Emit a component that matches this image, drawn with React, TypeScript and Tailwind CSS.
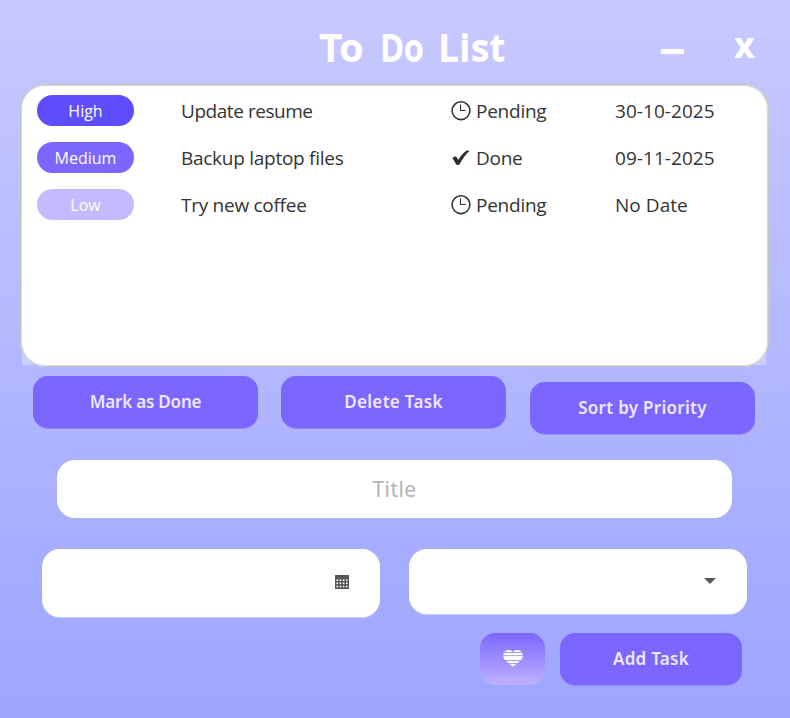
import React from "react";

type Task = {
  level: string;
  pill: string;
  title: string;
  titleSpacing: string;
  done: boolean;
  status: string;
  date: string;
};

const tasks: Task[] = [
  { level: "High", pill: "bg-[#5e4dff]", title: "Update resume", titleSpacing: "tracking-[-0.45px]", done: false, status: "Pending", date: "30-10-2025" },
  { level: "Medium", pill: "bg-[#7b66ff]", title: "Backup laptop files", titleSpacing: "tracking-[-0.27px]", done: true, status: "Done", date: "09-11-2025" },
  { level: "Low", pill: "bg-[#c5baff]", title: "Try new coffee", titleSpacing: "tracking-[-0.27px]", done: false, status: "Pending", date: "No Date" },
];

function ClockIcon() {
  return (
    <svg width="20" height="20" viewBox="0 0 20 20" fill="none" stroke="#333333">
      <circle cx="10" cy="9.7" r="8.9" strokeWidth="1.6" />
      <path d="M9.500 3.500V9.500H14.700" strokeWidth="1.100" />
    </svg>
  );
}

function CheckIcon() {
  return (
    <svg width="20" height="20" viewBox="0 0 20 20" fill="#2b2f33">
      <path d="M1.600 10.200C2.400 8.600 5.300 7.900 6 9.600L7.200 11.900C9.400 8.200 12.500 4.400 15 2.900C16 2.300 18 2.300 18.400 2.900C14.600 6.300 11.300 11 8.900 15.700C8.200 17.200 5.600 17.400 4.900 16L2.400 11.500C2.100 11 1.400 10.700 1.600 10.200Z" />
    </svg>
  );
}

function CalendarIcon() {
  const cols = [1.5, 4.600, 7.800, 10.900];
  const rows = [4.400, 7.500, 10.700];
  return (
    <svg width="14" height="14" viewBox="0 0 14 14">
      <rect width="14" height="14" fill="#575757" />
      {rows.map((y) => cols.map((x) => <rect key={`${x}-${y}`} x={x} y={y} width="1.600" height="1.600" fill="#ffffff" />))}
    </svg>
  );
}

function HeartIcon() {
  return (
    <svg width="20" height="17" viewBox="0 0 20 17">
      <defs>
        <clipPath id="heart">
          <path d="M10 16.700L2 10C-1 7 0 0 5.500 0C8 0 9.300 .8 10 2.200C10.700 .8 12 0 14.500 0C20 0 21 7 18 10Z" />
        </clipPath>
      </defs>
      <g clipPath="url(#heart)" fill="#ffffff">
        <rect y="0" width="20" height="2.100" />
        <rect y="2.900" width="20" height="2.400" />
        <rect y="6.100" width="20" height="3.900" />
        <rect y="10.900" width="20" height="2.100" />
        <rect y="13.900" width="20" height="2.800" />
      </g>
    </svg>
  );
}

function ActionButton({ label, spacing, className }: { label: string; spacing: string; className: string }) {
  return (
    <button
      className={`flex h-[52px] items-center justify-center rounded-[15px] bg-[#7b66ff] pb-px font-['Noto_Sans',sans-serif] text-[17px] font-semibold text-[#f0e6ff] shadow-[0_1px_0_#9688ff] ${className}`}
    >
      <span className={spacing}>{label}</span>
    </button>
  );
}

export default function App() {
  return (
    <main className="h-[718px] w-[790px] overflow-hidden bg-linear-to-b from-[#c8c9ff] to-[#9da5ff] font-['Open_Sans','Noto_Sans',sans-serif] text-[#333333]">
      <header className="grid h-[84px] grid-cols-[319px_186px_1fr] items-center pt-[9px]">
        <span />
        <h1 className="grid grid-cols-[60px_60px_66px] whitespace-nowrap pb-px font-['Noto_Sans',sans-serif] text-[37px] leading-none font-medium text-white [-webkit-text-stroke:1.8px_white]">
          <span className="origin-left scale-x-[1.03] pl-px tracking-[1px]">To </span>
          <span className="origin-left scale-x-[0.84] pl-[2px] tracking-[1px]">Do </span>
          <span className="origin-left scale-x-[0.96] tracking-[2px]">List</span>
        </h1>
        <div className="flex items-center pl-[156px]">
          <button aria-label="Minimize" className="mt-[9px] h-[5px] w-[23px] bg-white" />
          <button className="ml-[50px] text-[29px] leading-none font-extrabold text-white">X</button>
        </div>
      </header>

      <section className="ml-[20px] h-[283px] w-[749px]">
        <div className="bg-[linear-gradient(to_bottom,transparent_240px,#ffffff50_240px,#ffffff50_281px,transparent_281px)] bg-[length:744px_283px] bg-[position:2px_0] bg-no-repeat">
          <div className="h-[283px] rounded-[25px] border border-[#c6c6c6] bg-white pt-[2px] shadow-[inset_0_0_0_1px_#d6d6d6]">
            {tasks.map((t) => (
              <div key={t.title} className="grid h-[47px] grid-cols-[97px_270px_164px_1fr] items-center pl-[16px] text-[19px]">
                <span className={`flex h-[31px] items-center justify-center rounded-full text-[16px] text-white ${t.pill}`}>
                  <span>{t.level}</span>
                </span>
                <span className={`pt-[2px] pl-[47px] ${t.titleSpacing}`}>{t.title}</span>
                <span className="flex items-center gap-[5px] pl-[47px]">
                  {t.done ? <CheckIcon /> : <ClockIcon />}
                  <span className="pt-[2px] tracking-[-0.25px]">{t.status}</span>
                </span>
                <span className="pt-[2px] pl-[47px] tracking-[0.05px]">{t.date}</span>
              </div>
            ))}
          </div>
        </div>
      </section>

      <div className="flex items-start pt-[9px] pl-[33px]">
        <ActionButton label="Mark as Done" spacing="tracking-[-0.2px]" className="w-[225px]" />
        <ActionButton label="Delete Task" spacing="tracking-[0.32px]" className="ml-[23px] w-[225px]" />
        <ActionButton label="Sort by Priority" spacing="tracking-[0.28px]" className="mt-[6px] ml-[24px] w-[225px]" />
      </div>

      <div className="mt-[26px] ml-[57px] flex h-[58px] w-[675px] items-center justify-center rounded-[18px] bg-white pt-px font-['Noto_Sans',sans-serif] text-[21px] text-[#b3b3b3]">
        <span className="tracking-[0.4px]">Title</span>
      </div>

      <div className="mt-[31px] ml-[42px] flex items-start gap-[29px]">
        <div className="flex h-[68px] w-[338px] items-center justify-end rounded-[18px] bg-white pr-[31px] pb-[2px] shadow-[0_1px_0_#c9ccff]">
          <CalendarIcon />
        </div>
        <div className="flex h-[65px] w-[338px] items-center justify-end rounded-[18px] bg-white pr-[31px] pb-[2px] shadow-[0_1px_0_#c9ccff]">
          <svg width="12" height="6" viewBox="0 0 12 6"><path d="M0 0H12L6 6Z" fill="#575757" /></svg>
        </div>
      </div>

      <div className="mt-[16px] ml-[480px] flex items-start gap-[15px]">
        <button aria-label="Favorite" className="flex h-[52px] w-[65px] items-center justify-center rounded-[15px] bg-linear-to-b from-[#7b66ff] to-[#c0b0ff] pb-[2px]">
          <HeartIcon />
        </button>
        <ActionButton label="Add Task" spacing="tracking-[0.3px]" className="w-[182px]" />
      </div>
    </main>
  );
}
